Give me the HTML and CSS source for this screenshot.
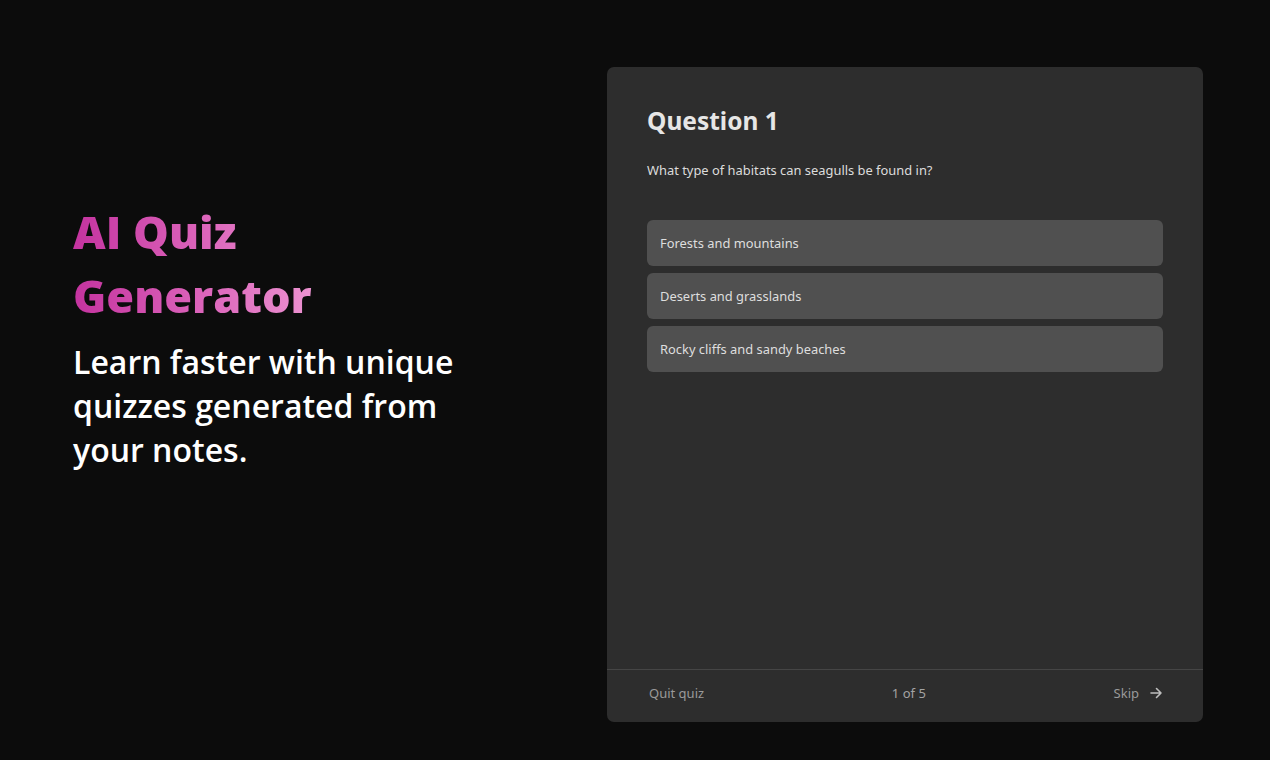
FILE: index.html
```html
<!DOCTYPE html>
<html lang="en">
<head>
<meta charset="utf-8">
<title>AI Quiz Generator</title>
<link rel="stylesheet" href="styles.css">
</head>
<body>
<main class="page">
  <section class="intro">
    <h1 class="title">AI Quiz<br>Generator</h1>
    <p class="lead">Learn faster with unique quizzes generated from your notes.</p>
  </section>
  <section class="card">
    <div class="card-body">
      <h2 class="q-title">Question 1</h2>
      <p class="q-text">What type of habitats can seagulls be found in?</p>
      <div class="options">
        <button class="option">Forests and mountains</button>
        <button class="option">Deserts and grasslands</button>
        <button class="option">Rocky cliffs and sandy beaches</button>
      </div>
    </div>
    <footer class="card-footer">
      <span class="f-link">Quit quiz</span>
      <span class="f-count">1 of 5</span>
      <span class="f-link skip">Skip
        <svg class="arrow" width="14" height="14" viewBox="0 0 14 14" fill="none" stroke="currentColor" stroke-width="1.6" stroke-linecap="round" stroke-linejoin="round"><path d="M2 7h10M7.5 2.5 12 7l-4.5 4.5"/></svg>
      </span>
    </footer>
  </section>
</main>
</body>
</html>
```
FILE: styles.css
```css
* { box-sizing: border-box; }
html, body { margin: 0; height: 100%; }
body {
  background: #0c0c0c;
  font-family: "Open Sans", "Noto Sans", sans-serif;
}
.page {
  height: 760px;
  display: grid;
  grid-template-columns: 1fr 596px;
  padding: 67px 67px 38px 73px;
}
.intro {
  padding-top: 133px;
}
.title {
  display: inline-block;
  margin: 0;
  font-size: 45px;
  line-height: 64px;
  font-weight: 800;
  background: linear-gradient(90deg, #c4339f 0%, #dc65bb 55%, #ec92d1 100%);
  -webkit-background-clip: text;
  background-clip: text;
  color: transparent;
}
.lead {
  margin: 12px 0 0;
  max-width: 410px;
  color: #ffffff;
  font-size: 32px;
  line-height: 44px;
  font-weight: 600;
}
.card {
  background: #2d2d2d;
  border-radius: 7px;
  display: flex;
  flex-direction: column;
  font-family: "Noto Sans", sans-serif;
}
.card-body {
  flex: 1;
  padding: 37px 40px 0 40px;
}
.q-title {
  margin: 0;
  color: #e6e6e6;
  font-size: 24.5px;
  line-height: 34px;
  font-weight: 700;
}
.q-text {
  margin: 22px 0 0;
  color: #dcdcdc;
  font-size: 12.9px;
  line-height: 20px;
}
.options {
  margin-top: 40px;
  display: flex;
  flex-direction: column;
  gap: 7px;
}
.option {
  display: block;
  width: 100%;
  height: 46px;
  text-align: left;
  padding: 0 13px;
  border: 0;
  border-radius: 6px;
  background: #505050;
  color: #dedede;
  font-family: inherit;
  font-size: 12.9px;
}
.card-footer {
  height: 53px;
  border-top: 1px solid #454545;
  display: flex;
  align-items: center;
  justify-content: space-between;
  padding: 0 40px 6px 42px;
  color: #9a9a9a;
  font-size: 13px;
}
.f-count { color: #a3a3a3; }
.skip {
  display: inline-flex;
  align-items: center;
  gap: 10px;
}
.arrow { color: #bdbdbd; }
```
